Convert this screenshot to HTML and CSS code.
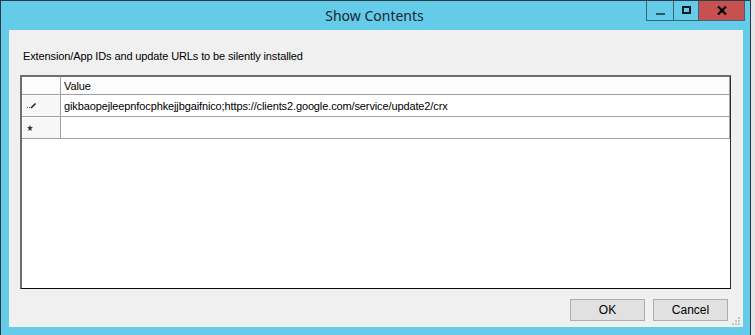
FILE: index.html
```html
<!DOCTYPE html>
<html lang="en">
<head>
    <meta charset="UTF-8">
    <title>Show Contents</title>
    <link rel="stylesheet" href="styles.css">
</head>
<body>
    <div class="window">
        <div class="titlebar">
            <span></span>
            <div class="title">Show Contents</div>
            <div class="controls">
                <div class="ctl min"><span class="min-bar"></span></div>
                <div class="ctl max"><span class="max-box"></span></div>
                <div class="ctl close">
                    <svg width="10" height="9" viewBox="0 0 10 9">
                        <path d="M1 0.5 L9 8.5 M9 0.5 L1 8.5" stroke="#000" stroke-width="2.2" fill="none"/>
                    </svg>
                </div>
            </div>
        </div>
        <div class="client">
            <p class="caption">Extension/App IDs and update URLs to be silently installed</p>
            <div class="grid">
                <table>
                    <tr class="head">
                        <td class="rowhead"></td>
                        <td>Value</td>
                    </tr>
                    <tr class="row">
                        <td class="rowhead">
                            <svg width="10" height="7" viewBox="0 0 10 7">
                                <rect x="0" y="5" width="1" height="1" fill="#555"/>
                                <rect x="2" y="5" width="1" height="1" fill="#555"/>
                                <path d="M4 6 L8.5 1.5" stroke="#222" stroke-width="1.6"/>
                            </svg>
                        </td>
                        <td>gikbaopejleepnfocphkejjbgaifnico;https://clients2.google.com/service/update2/crx</td>
                    </tr>
                    <tr class="row">
                        <td class="rowhead">
                            <svg width="6" height="6" viewBox="0 0 6 6">
                                <path d="M3 0 L3.8 2 L6 2.2 L4.3 3.6 L4.8 6 L3 4.7 L1.2 6 L1.7 3.6 L0 2.2 L2.2 2 Z" fill="#333"/>
                            </svg>
                        </td>
                        <td></td>
                    </tr>
                    <tr class="rest">
                        <td colspan="2"></td>
                    </tr>
                </table>
            </div>
            <div class="footer">
                <button class="btn">OK</button>
                <button class="btn">Cancel</button>
            </div>
            <div class="grip">
                <svg width="9" height="9" viewBox="0 0 9 9">
                    <rect x="6" y="0" width="2" height="2" fill="#c4c4c4"/>
                    <rect x="3" y="3" width="2" height="2" fill="#c4c4c4"/>
                    <rect x="6" y="3" width="2" height="2" fill="#c4c4c4"/>
                    <rect x="0" y="6" width="2" height="2" fill="#c4c4c4"/>
                    <rect x="3" y="6" width="2" height="2" fill="#c4c4c4"/>
                    <rect x="6" y="6" width="2" height="2" fill="#c4c4c4"/>
                </svg>
            </div>
        </div>
    </div>
</body>
</html>
```

FILE: styles.css
```css
body{
    margin: 0;
    background-color: #e4e4e4;
    overflow: hidden;
}

.window{
    width: 749px;
    height: 334px;
    border-top: 1px solid #2c3b45;
    border-left: 1px solid #2c3b45;
    border-right: 1px solid #2c3b45;
    background-color: #64cbe8;
    display: flex;
    flex-direction: column;
}

.titlebar{
    height: 29px;
    display: grid;
    grid-template-columns: 1fr auto 1fr;
}

.title{
    font-family: "Noto Sans", sans-serif;
    font-size: 14px;
    color: #1b2630;
    line-height: 29px;
    padding-right: 2px;
}

.controls{
    justify-self: end;
    align-self: start;
    display: flex;
    margin-right: 5px;
    height: 20px;
}

.ctl{
    height: 19px;
    border-bottom: 1px solid #3a6474;
    border-left: 1px solid #3a6474;
    display: flex;
    align-items: center;
    justify-content: center;
}

.min{
    width: 26px;
}

.max{
    width: 24px;
}

.close{
    width: 45px;
    background-color: #c75050;
    border-right: 1px solid #3a6474;
}

.min-bar{
    width: 9px;
    height: 2px;
    margin-top: 6px;
    background-color: #2b5868;
}

.max-box{
    width: 5px;
    height: 4px;
    border: 2px solid #0c1a20;
    margin-top: -1px;
}

.client{
    position: relative;
    margin: 0 7px 0 8px;
    height: 297px;
    background-color: #f0f0f0;
    padding: 0 12px 0 11px;
    display: flex;
    flex-direction: column;
    font-family: "Liberation Sans", Arial, sans-serif;
    font-size: 11px;
    letter-spacing: -0.12px;
    color: #000;
}

.caption{
    margin: 0;
    height: 26px;
    padding-top: 19px;
    padding-left: 3px;
    line-height: 14px;
}

.grid{
    height: 211px;
    border-top: 2px solid #6e6e6e;
    border-left: 2px solid #6e6e6e;
    border-right: 1px solid #2e2e2e;
    border-bottom: 1px solid #0a0a0a;
    background-color: #fff;
}

table{
    width: 100%;
    height: 100%;
    border-collapse: collapse;
}

td{
    padding: 0 0 0 3px;
    border-right: 1px solid #a0a0a0;
    border-bottom: 1px solid #a0a0a0;
    white-space: nowrap;
}

.head td{
    height: 16px;
    background-color: #fcfcfc;
    padding-top: 1px;
}

.row td{
    height: 21px;
}

.rowhead{
    width: 33px;
    background-color: #f7f7f7;
    box-shadow: inset 1px 1px 0 #fff;
    padding-left: 5px;
}

.row .rowhead svg{
    display: block;
}

.rest td{
    border: none;
    background-color: #fff;
}

.footer{
    margin-top: 10px;
    display: flex;
    justify-content: flex-end;
    gap: 8px;
    padding-right: 3px;
}

.btn{
    width: 75px;
    height: 22px;
    background-color: #e1e1e1;
    border: 1px solid #adadad;
    font-family: "Liberation Sans", Arial, sans-serif;
    font-size: 12px;
    color: #000;
    padding: 0;
}

.grip{
    position: absolute;
    right: 2px;
    bottom: 2px;
    width: 9px;
    height: 9px;
}
```
